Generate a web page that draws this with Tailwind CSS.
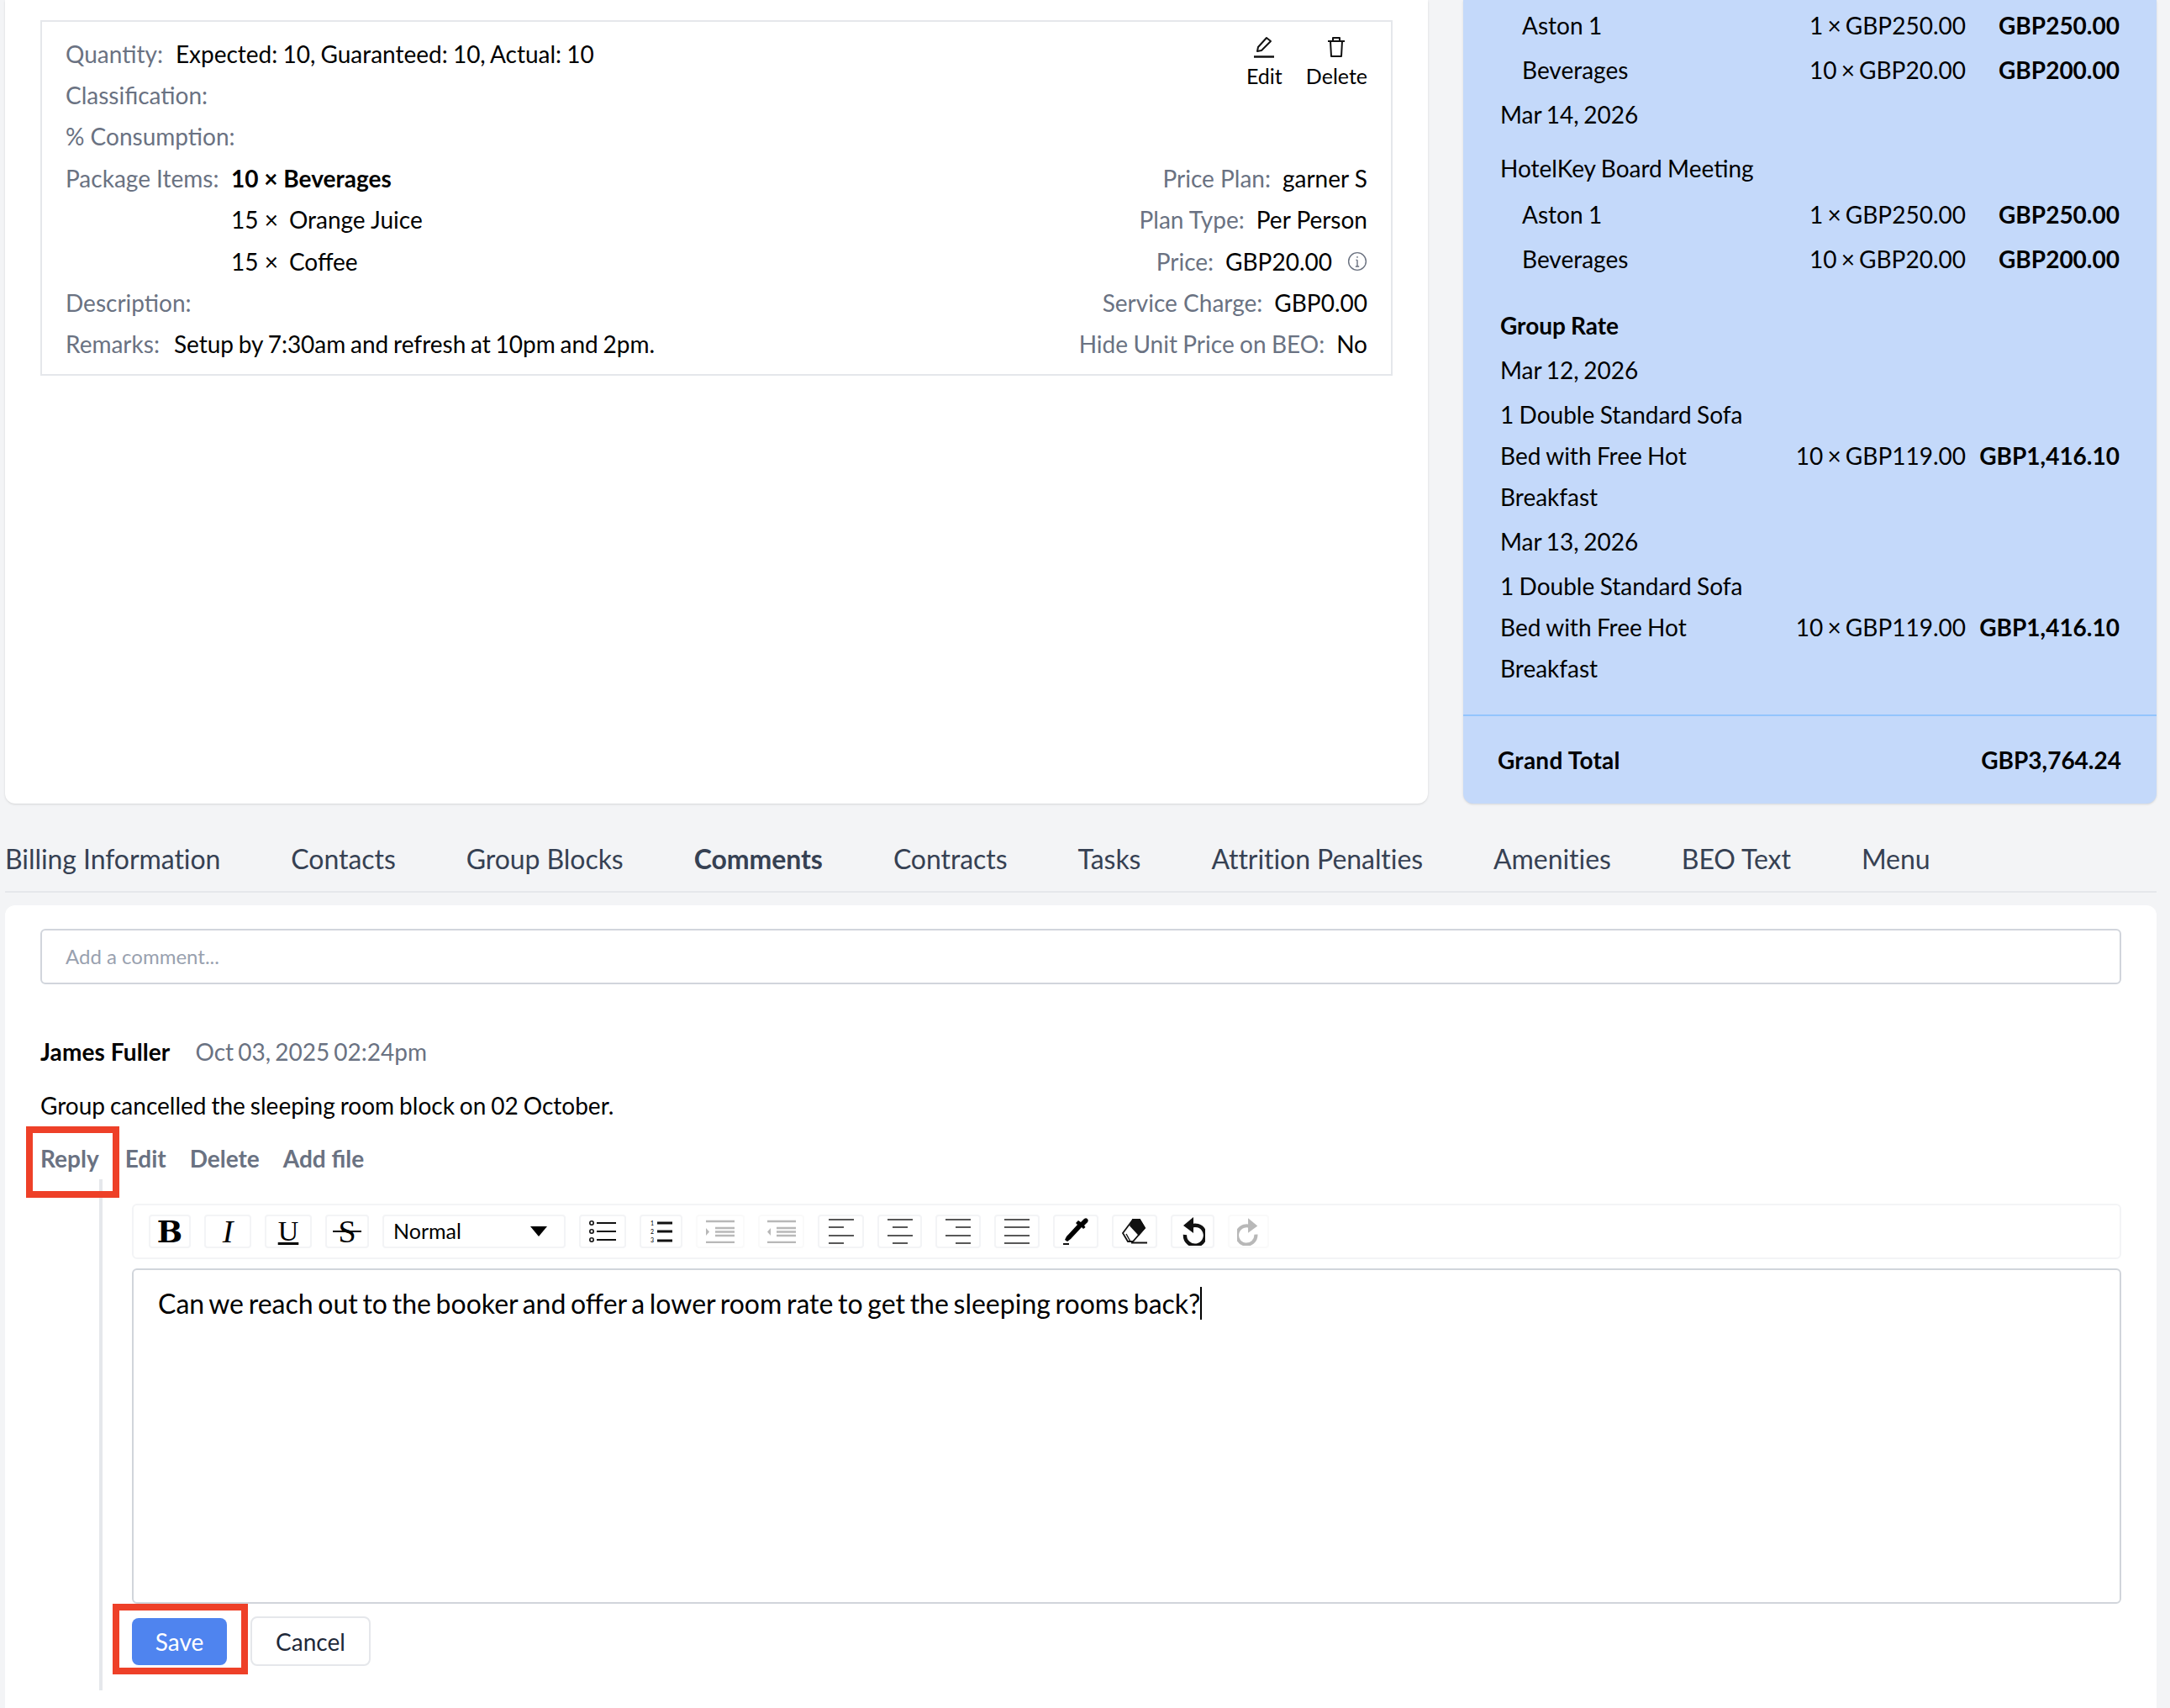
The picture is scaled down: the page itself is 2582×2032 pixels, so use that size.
<!DOCTYPE html>
<html lang="en">
<head>
  <meta charset="UTF-8">
  <title>Comments</title>
  <script src="https://cdn.jsdelivr.net/npm/@tailwindcss/browser@4"></script>
</head>
<body class="bg-[#f3f4f6] font-['Lato',sans-serif] text-[28px] text-black">
  <div class="relative w-[2582px] h-[2032px] overflow-hidden">

    <!-- top cards -->
    <div class="flex h-[956px] pl-[6px]">
      <section class="w-[1693px] bg-white rounded-b-xl shadow pt-[24px] px-[42px]">
        <div class="flex justify-between h-[423px] w-[1609px] border-2 border-[#e5e7eb] pt-[13px] px-[28px]">
          <div>
            <div class="flex items-center h-[49.4px]"><span class="text-gray-500 mr-[15px]">Quantity:</span><span class="[word-spacing:-1px]">Expected: 10, Guaranteed: 10, Actual: 10</span></div>
            <div class="flex items-center h-[49.4px] text-gray-500">Classification:</div>
            <div class="flex items-center h-[49.4px] text-gray-500">% Consumption:</div>
            <div class="flex items-center h-[49.4px]"><span class="text-gray-500 w-[197px]">Package Items:</span><span class="font-bold">10 × Beverages</span></div>
            <div class="flex items-center h-[49.4px] pl-[197px]">15 ×<span class="ml-[13px]">Orange Juice</span></div>
            <div class="flex items-center h-[49.4px] pl-[197px]">15 ×<span class="ml-[13px]">Coffee</span></div>
            <div class="flex items-center h-[49.4px] text-gray-500">Description:</div>
            <div class="flex items-center h-[49.4px]"><span class="text-gray-500 mr-[17px]">Remarks:</span><span class="[word-spacing:-1.4px]">Setup by 7:30am and refresh at 10pm and 2pm.</span></div>
          </div>
          <div class="flex flex-col items-end">
            <div class="flex h-[148.2px] gap-[28px] text-[25px] pt-[4px]">
              <div class="flex flex-col items-center">
                <svg width="26" height="26" viewBox="0 0 26 26" fill="none" stroke="#111" stroke-width="2" stroke-linejoin="round"><path d="M5 18 L6 13 L16 2 L21 6 L10 17 Z"/><path d="M1 24.5 H25" stroke-width="2.5"/></svg>
                <span class="mt-[6px] leading-[30px]">Edit</span>
              </div>
              <div class="flex flex-col items-center">
                <svg width="24" height="26" viewBox="0 0 24 26" fill="none" stroke="#111" stroke-width="2" stroke-linejoin="round"><path d="M2 6 H22"/><path d="M8 6 V2 H16 V6"/><path d="M5 6 L6 24 H18 L19 6"/></svg>
                <span class="mt-[6px] leading-[30px]">Delete</span>
              </div>
            </div>
            <div class="flex items-center h-[49.4px]"><span class="text-gray-500 mr-[14px]">Price Plan:</span>garner S</div>
            <div class="flex items-center h-[49.4px]"><span class="text-gray-500 mr-[14px]">Plan Type:</span>Per Person</div>
            <div class="flex items-center h-[49.4px]"><span class="text-gray-500 mr-[14px]">Price:</span>GBP20.00
              <svg class="ml-[18px]" width="24" height="24" viewBox="0 0 22 22" fill="none" stroke="#6b7280" stroke-width="1.3"><circle cx="11" cy="11" r="9.5"/><path d="M11 9.5 V16.5 M9 16.5 H13 M9.5 9.5 H11"/><path d="M11 5.5 V7.2"/></svg>
            </div>
            <div class="flex items-center h-[49.4px]"><span class="text-gray-500 mr-[14px]">Service Charge:</span>GBP0.00</div>
            <div class="flex items-center h-[49.4px]"><span class="text-gray-500 mr-[14px] [word-spacing:-0.8px]">Hide Unit Price on BEO:</span>No</div>
          </div>
        </div>
      </section>

      <aside class="w-[825px] ml-[42px] bg-[#c4d9fa] rounded-b-xl shadow pt-[6px] flex flex-col">
        <div class="pl-[44px] pr-[44px] flex-1 leading-[49px] [word-spacing:-0.8px]">
          <div class="flex items-center mb-1 pl-[26px]"><span class="flex-1">Aston 1</span><span class="[word-spacing:-2px]">1 × GBP250.00</span><span class="w-[183px] text-right font-bold">GBP250.00</span></div>
          <div class="flex items-center mb-1 pl-[26px]"><span class="flex-1">Beverages</span><span class="[word-spacing:-2px]">10 × GBP20.00</span><span class="w-[183px] text-right font-bold">GBP200.00</span></div>
          <div class="mb-[15px] [word-spacing:-1.5px]">Mar 14, 2026</div>
          <div class="mb-[6px]">HotelKey Board Meeting</div>
          <div class="flex items-center mb-1 pl-[26px]"><span class="flex-1">Aston 1</span><span class="[word-spacing:-2px]">1 × GBP250.00</span><span class="w-[183px] text-right font-bold">GBP250.00</span></div>
          <div class="flex items-center mb-[30px] pl-[26px]"><span class="flex-1">Beverages</span><span class="[word-spacing:-2px]">10 × GBP20.00</span><span class="w-[183px] text-right font-bold">GBP200.00</span></div>
          <div class="mb-1 font-bold">Group Rate</div>
          <div class="mb-1 [word-spacing:-1.5px]">Mar 12, 2026</div>
          <div class="flex items-center mb-1"><span class="flex-1"><span class="block w-[330px]">1 Double Standard Sofa Bed with Free Hot Breakfast</span></span><span class="[word-spacing:-2px]">10 × GBP119.00</span><span class="w-[183px] text-right font-bold">GBP1,416.10</span></div>
          <div class="mb-1 [word-spacing:-1.5px]">Mar 13, 2026</div>
          <div class="flex items-center"><span class="flex-1"><span class="block w-[330px]">1 Double Standard Sofa Bed with Free Hot Breakfast</span></span><span class="[word-spacing:-2px]">10 × GBP119.00</span><span class="w-[183px] text-right font-bold">GBP1,416.10</span></div>
        </div>
        <div class="h-[106px] border-t-2 border-[#93c5fd] flex items-center justify-between pl-[41px] pr-[42px] font-bold">
          <span class="tracking-[0.25px]">Grand Total</span><span>GBP3,764.24</span>
        </div>
      </aside>
    </div>

    <!-- tabs -->
    <nav class="ml-[6px] w-[2560px] h-[106px] border-b-2 border-[#e5e7eb] flex items-center gap-[84px] text-[32px] text-gray-700 tracking-[-0.06px] pt-[42px] pb-[14px]">
      <span>Billing Information</span>
      <span>Contacts</span>
      <span>Group Blocks</span>
      <span class="font-bold">Comments</span>
      <span>Contracts</span>
      <span>Tasks</span>
      <span>Attrition Penalties</span>
      <span>Amenities</span>
      <span>BEO Text</span>
      <span>Menu</span>
    </nav>

    <!-- comments -->
    <section class="ml-[6px] mt-[15px] w-[2560px] h-[960px] bg-white rounded-t-xl pt-[28px] px-[42px]">
      <div class="h-[66px] border-2 border-gray-300 rounded-md flex items-center px-[28px] text-[24px] text-gray-400">Add a comment...</div>

      <div class="flex items-center mt-[56px] leading-[49px]"><span class="font-bold tracking-[0.1px]">James Fuller</span><span class="ml-[30px] text-gray-500 [word-spacing:-2px]">Oct 03, 2025 02:24pm</span></div>
      <div class="mt-[15px] leading-[49px] [word-spacing:-1.2px]">Group cancelled the sleeping room block on 02 October.</div>
      <div class="flex gap-[28px] mt-[14px] leading-[49px] font-bold text-gray-500">
        <span class="mr-[3px]">Reply</span><span>Edit</span><span>Delete</span><span>Add file</span>
      </div>

      <div class="ml-[70px] h-[608px] border-l-4 border-[#e5e7eb] pl-[35px] pt-[29px]">
        <div class="h-[66px] border-2 border-[#f3f4f6] rounded-md flex items-center gap-[16px] pl-[18px]">
          <button class="flex items-center justify-center w-[50px] h-[40px] border-2 border-[#f3f4f6] rounded font-['DejaVu_Serif',serif] font-bold text-[36px] leading-none">B</button>
          <button class="flex items-center justify-center w-[56px] h-[40px] border-2 border-[#f3f4f6] rounded font-['Liberation_Serif',serif] italic text-[38px] leading-none">I</button>
          <button class="flex items-center justify-center w-[56px] h-[40px] border-2 border-[#f3f4f6] rounded font-['Liberation_Serif',serif] text-[34px] leading-none underline underline-offset-2">U</button>
          <button class="flex items-center justify-center w-[52px] h-[40px] border-2 border-[#f3f4f6] rounded font-['Liberation_Serif',serif] text-[38px] leading-none"><span class="relative">S<span class="absolute left-[-6px] right-[-6px] top-[48%] h-[2px] bg-black"></span></span></button>
          <button class="flex items-center justify-between w-[218px] h-[40px] border-2 border-[#f3f4f6] rounded pl-[11px] pr-[20px] text-[25px]">Normal
            <svg width="20" height="12" viewBox="0 0 20 12"><path d="M0 0 H20 L10 12 Z"/></svg>
          </button>
          <button class="flex items-center justify-center w-[56px] h-[40px] border-2 border-[#f3f4f6] rounded">
            <svg width="32" height="26" viewBox="0 0 32 26" fill="none" stroke="#111"><circle cx="3" cy="3" r="2.2" stroke-width="1.6"/><circle cx="3" cy="13" r="2.2" stroke-width="1.6"/><circle cx="3" cy="23" r="2.2" stroke-width="1.6"/><path d="M9 3 H32 M9 13 H32 M9 23 H32" stroke-width="1.8"/></svg>
          </button>
          <button class="flex items-center justify-center w-[51px] h-[40px] border-2 border-[#f3f4f6] rounded">
            <svg width="26" height="28" viewBox="0 0 26 28" stroke="#111"><text x="0" y="7" font-size="7" font-family="Lato" stroke="none">1</text><text x="0" y="17" font-size="7" font-family="Lato" stroke="none">2</text><text x="0" y="27" font-size="7" font-family="Lato" stroke="none">3</text><path d="M8 4 H26 M8 14 H26 M8 25 H26" stroke-width="3.2" fill="none"/></svg>
          </button>
          <button class="flex items-center justify-center w-[58px] h-[40px] border-2 border-[#fafafa] rounded">
            <svg width="34" height="28" viewBox="0 0 34 28" fill="none" stroke="#b8b8b8" stroke-width="2.4"><path d="M0 2 H34 M11 10 H34 M11 14.5 H34 M11 19 H34 M0 27 H34"/><path d="M0 10 L4 14.5 L0 19 Z" fill="#b8b8b8" stroke="none"/></svg>
          </button>
          <button class="flex items-center justify-center w-[55px] h-[40px] border-2 border-[#fafafa] rounded">
            <svg width="34" height="28" viewBox="0 0 34 28" fill="none" stroke="#b8b8b8" stroke-width="2.4"><path d="M0 2 H34 M11 10 H34 M11 14.5 H34 M11 19 H34 M0 27 H34"/><path d="M4 10 L0 14.5 L4 19 Z" fill="#b8b8b8" stroke="none"/></svg>
          </button>
          <button class="flex items-center justify-center w-[55px] h-[40px] border-2 border-[#f3f4f6] rounded">
            <svg width="30" height="30" viewBox="0 0 30 30" fill="none" stroke="#222" stroke-width="1.7"><path d="M0 1 H30 M0 10 H18 M0 20 H30 M0 29 H18"/></svg>
          </button>
          <button class="flex items-center justify-center w-[53px] h-[40px] border-2 border-[#f3f4f6] rounded">
            <svg width="30" height="30" viewBox="0 0 30 30" fill="none" stroke="#222" stroke-width="1.7"><path d="M0 1 H30 M6 10 H24 M0 20 H30 M6 29 H24"/></svg>
          </button>
          <button class="flex items-center justify-center w-[54px] h-[40px] border-2 border-[#f3f4f6] rounded">
            <svg width="30" height="30" viewBox="0 0 30 30" fill="none" stroke="#222" stroke-width="1.7"><path d="M0 1 H30 M12 10 H30 M0 20 H30 M12 29 H30"/></svg>
          </button>
          <button class="flex items-center justify-center w-[54px] h-[40px] border-2 border-[#f3f4f6] rounded">
            <svg width="30" height="30" viewBox="0 0 30 30" fill="none" stroke="#222" stroke-width="1.7"><path d="M0 1 H30 M0 10 H30 M0 20 H30 M0 29 H30"/></svg>
          </button>
          <button class="flex items-center justify-center w-[54px] h-[40px] border-2 border-[#f3f4f6] rounded">
            <svg width="30" height="32" viewBox="0 0 30 32"><path d="M21 5 L25 1 Q28 -1 29.5 2 Q30.5 5 27 7 L25 9 L26.5 11 L24 13 L22 11 L9 25 L5 28 L2 26 L4 22 L17 8 L15 6 L18 3 Z"/><path d="M0 31 H7" stroke="#111" stroke-width="2"/></svg>
          </button>
          <button class="flex items-center justify-center w-[54px] h-[40px] border-2 border-[#f3f4f6] rounded">
            <svg width="32" height="30" viewBox="0 0 32 30" fill="none" stroke="#111" stroke-width="1.8"><path d="M14 1 L2 17 L8 27 L14 27 L28 11 L22 1 Z"/><path d="M14 1 H22 L28 11 L21 19 L11 8 Z" fill="#111"/><path d="M6 18 L11 27" stroke-width="1.4"/><path d="M12 28.5 H31" stroke-width="2"/></svg>
          </button>
          <button class="flex items-center justify-center w-[52px] h-[40px] border-2 border-[#f3f4f6] rounded">
            <svg width="30" height="34" viewBox="0 0 30 34"><path d="M9 10 A12 12 0 1 1 4 19" fill="none" stroke="#111" stroke-width="4.4" transform="translate(2 2)"/><path d="M16 0 V19 L4 10 Z" fill="#111"/></svg>
          </button>
          <button class="flex items-center justify-center w-[49px] h-[40px] border-2 border-[#fafafa] rounded">
            <svg width="28" height="34" viewBox="0 0 30 34"><path d="M21 10 A12 12 0 1 0 26 19" fill="none" stroke="#b8b8b8" stroke-width="4.4" transform="translate(-2 2)"/><path d="M14 0 V19 L26 10 Z" fill="#b8b8b8"/></svg>
          </button>
        </div>

        <div class="mt-[11px] h-[399px] border-2 border-[#d1d5db] rounded-md pl-[29px] pt-[16px] text-[32px] leading-[48px] [word-spacing:-2.5px]">
          <span class="border-r-2 border-black">Can we reach out to the booker and offer a lower room rate to get the sleeping rooms back?</span>
        </div>

        <div class="flex mt-[15px] items-center gap-[28px] text-[28px]">
          <button class="w-[113px] h-[56px] bg-[#4f84ef] text-white rounded-lg">Save</button>
          <button class="w-[143px] h-[59px] border-2 border-[#e5e7eb] rounded-lg text-gray-800">Cancel</button>
        </div>
      </div>
    </section>

    <!-- red annotations -->
    <div class="absolute left-[31px] top-[1340px] w-[111px] h-[85px] border-8 border-[#ee4028]"></div>
    <div class="absolute left-[134px] top-[1908px] w-[161px] h-[84px] border-8 border-[#ee4028]"></div>
  </div>
</body>
</html>
